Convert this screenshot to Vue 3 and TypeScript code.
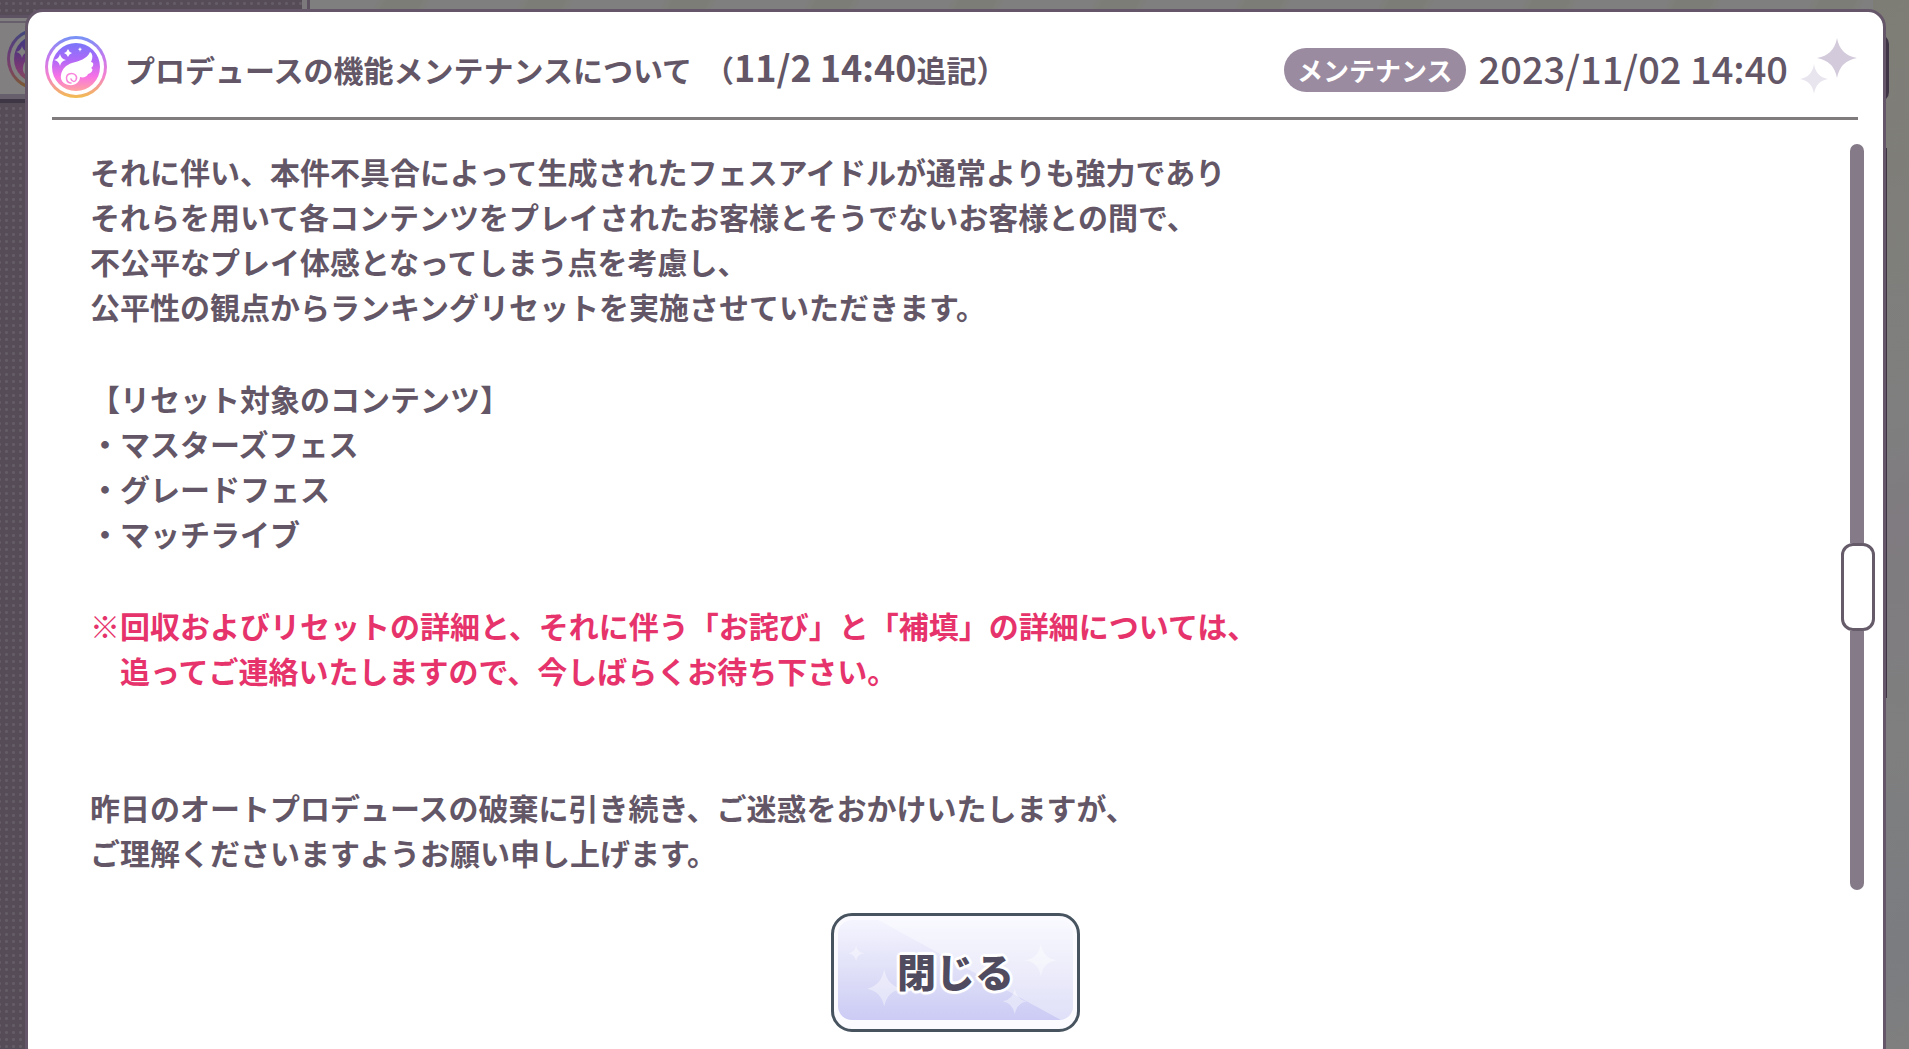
<script setup lang="ts">
interface Block {
  lines: string[]
  notice?: boolean
  spaced?: boolean
}

const blocks: Block[] = [
  {
    lines: [
      'それに伴い、本件不具合によって生成されたフェスアイドルが通常よりも強力であり',
      'それらを用いて各コンテンツをプレイされたお客様とそうでないお客様との間で、',
      '不公平なプレイ体感となってしまう点を考慮し、',
      '公平性の観点からランキングリセットを実施させていただきます。',
    ],
  },
  {
    lines: [
      '【リセット対象のコンテンツ】',
      '・マスターズフェス',
      '・グレードフェス',
      '・マッチライブ',
    ],
  },
  {
    notice: true,
    lines: [
      '※回収およびリセットの詳細と、それに伴う「お詫び」と「補填」の詳細については、',
      '　追ってご連絡いたしますので、今しばらくお待ち下さい。',
    ],
  },
  {
    spaced: true,
    lines: [
      '昨日のオートプロデュースの破棄に引き続き、ご迷惑をおかけいたしますが、',
      'ご理解くださいますようお願い申し上げます。',
    ],
  },
]
</script>

<template>
  <div class="page">
    <!-- Dimmed screen behind the dialog -->
    <div class="backdrop" aria-hidden="true">
      <div class="side">
        <div class="side-item">
          <svg class="side-icon" viewBox="0 0 62 62">
            <use href="#wing" />
          </svg>
        </div>
      </div>
      <div class="stage"></div>
      <div class="tabs">
        <div class="tab"></div>
        <div class="tab tab-long"></div>
      </div>
    </div>

    <main class="dialog" role="dialog" aria-labelledby="dialog-title">
      <header class="head">
        <svg class="emblem" viewBox="0 0 62 68" aria-hidden="true">
          <defs>
            <linearGradient id="ring" x1="0" y1="0" x2="0" y2="1">
              <stop offset="0" stop-color="#7593f6" />
              <stop offset="0.35" stop-color="#c678ee" />
              <stop offset="0.65" stop-color="#f583d0" />
              <stop offset="1" stop-color="#f2bd4c" />
            </linearGradient>
            <linearGradient id="disc" x1="0" y1="0" x2="0" y2="1">
              <stop offset="0" stop-color="#7a76fa" />
              <stop offset="0.35" stop-color="#ae68f8" />
              <stop offset="0.7" stop-color="#f872e6" />
              <stop offset="1" stop-color="#ffa3a0" />
            </linearGradient>
            <g id="wing">
              <circle cx="31" cy="31" r="31" fill="url(#ring)" />
              <circle cx="31" cy="31" r="28" fill="#fff" />
              <circle cx="31" cy="31" r="24" fill="url(#disc)" />
              <path
                fill="#fff"
                d="M45 16C48 18 48 22 46 26C49 26 49 30 46 32C49 33 47 37 43 38C42 41 38 42 35 41C35 46 30 50 24 49C18 48 15 44 16 39C17 33 21 29 27 27C34 25 42 23 45 16Z"
              />
              <path
                fill="none"
                stroke="#f985dc"
                stroke-width="1.5"
                stroke-linecap="round"
                d="M26 47C21 47 20 40 24 38C29 36 33 40 31 44C30 46 27 46 26 43"
              />
              <path fill="#fff" d="M15 18Q16 23 21 24Q16 25 15 30Q14 25 9 24Q14 23 15 18Z" />
              <path fill="#fff" d="M23 13Q24 16 27 17Q24 18 23 21Q22 18 19 17Q22 16 23 13Z" />
              <path fill="#fff" d="M35 11Q35 13 37 13Q35 14 35 16Q35 14 33 13Q35 13 35 11Z" />
            </g>
          </defs>
          <use href="#wing" />
        </svg>
        <h1 id="dialog-title" class="title">
          プロデュースの機能メンテナンスについて<span class="open">（</span><span class="num">11/2 14:40</span>追記）
        </h1>
        <span class="badge">メンテナンス</span>
        <time class="date" datetime="2023-11-02T14:40">2023/11/02 14:40</time>
        <svg class="sparkles" viewBox="0 0 58 64" aria-hidden="true">
          <path fill="#d3cadb" d="M37 0Q40 17 57 20Q40 23 37 40Q34 23 17 20Q34 17 37 0Z" />
          <path fill="#e9e5ef" d="M14 26Q16 39 28 41Q16 43 14 56Q12 43 0 41Q12 39 14 26Z" />
        </svg>
      </header>

      <div class="body">
        <article id="dialog-text" class="text">
          <p
            v-for="(block, i) in blocks"
            :key="i"
            class="block"
            :class="{ notice: block.notice, spaced: block.spaced }"
          >
            <span v-for="(line, j) in block.lines" :key="j" class="line">{{ line }}</span>
          </p>
        </article>
        <div class="scroll" role="scrollbar" aria-valuenow="60" aria-controls="dialog-text">
          <div class="track"></div>
          <div class="thumb"></div>
          <div class="track track-rest"></div>
        </div>
      </div>

      <footer class="foot">
        <button class="close-button" type="button">
          <svg class="facets" viewBox="0 0 234 102" preserveAspectRatio="none" aria-hidden="true">
            <defs>
              <linearGradient id="face" x1="0" y1="0" x2="0" y2="1">
                <stop offset="0" stop-color="#f5f5ff" />
                <stop offset="0.5" stop-color="#e0e0f8" />
                <stop offset="1" stop-color="#cbcbf5" />
              </linearGradient>
            </defs>
            <rect width="234" height="102" fill="url(#face)" />
            <path fill="#fff" fill-opacity="0.4" d="M40 0H234V102H222Z" />
            <g fill="#fff" fill-opacity="0.4">
              <path d="M46 50Q49 67 63 70Q49 73 46 88Q43 73 29 70Q43 67 46 50Z" />
              <path d="M176 70Q178 81 188 83Q178 85 176 96Q174 85 164 83Q174 81 176 70Z" />
              <path d="M18 26Q19 33 26 34Q19 35 18 42Q17 35 10 34Q17 33 18 26Z" />
              <path d="M202 24Q204 39 218 41Q204 43 202 58Q200 43 186 41Q200 39 202 24Z" />
            </g>
          </svg>
          <span class="label">閉じる</span>
        </button>
      </footer>
    </main>
  </div>
</template>

<style>
body {
  margin: 0;
  overflow: hidden;
}
</style>

<style scoped>
* {
  box-sizing: border-box;
}

.page {
  position: relative;
  height: 100vh;
  overflow: hidden;
  padding: 9px 23px 0 25px;
  background: #7f7f7e;
  color: #635666;
  font-family: 'Noto Sans CJK JP', 'Noto Sans', sans-serif;
}

.backdrop {
  position: absolute;
  inset: 0;
  display: flex;
}

.side {
  width: 310px;
  padding-top: 15px;
  border-right: 3px solid #5d5360;
  background:
    linear-gradient(#7c797d, #7c797d) right / 5px 100% no-repeat,
    radial-gradient(circle, #655d65 1px, transparent 2px) 3px 0 / 7px 7px,
    #554c58;
}

.side-item {
  height: 88px;
  padding: 10px 0 0 7px;
  border-top: 3px solid #5c5261;
  border-bottom: 4px solid #3e3644;
  background: #817f80;
  box-shadow: inset 0 3px #817f80, inset 0 5px #67606c, inset 0 -5px #67606c;
}

.side-icon {
  width: 62px;
  height: 62px;
  filter: brightness(0.5);
}

.stage {
  flex: 1;
  background: repeating-linear-gradient(115deg, #7f7f7f 0 60px, #7d7d77 70px 100px, #7f7f7f 110px 130px);
}

.tabs {
  display: flex;
  flex-direction: column;
  gap: 46px;
  width: 36px;
  padding-top: 34px;
  background: linear-gradient(160deg, #7e7d75, #7f7f7f 40%, #7f7b80 50%, #7f7f7f 70%, #7a7c80 90%, #7f7f7f);
}

.tab {
  width: 16px;
  height: 68px;
  border-radius: 0 10px 10px 0;
  background: #3f3545;
}

.tab-long {
  width: 14px;
  height: 550px;
  border-radius: 0;
}

.dialog {
  position: relative;
  border: 3px solid #655769;
  border-radius: 18px;
  background: #fff;
}

.head {
  display: flex;
  align-items: center;
  height: 108px;
  margin: 0 25px 0 24px;
  padding-top: 11px;
  border-bottom: 3px solid #807b7d;
}

.emblem {
  flex: none;
  width: 62px;
  height: 68px;
  margin: 0 18px 0 -7px;
}

.title {
  flex: 1;
  margin: 0;
  padding-bottom: 6px;
  font-size: 30px;
  font-weight: 700;
  line-height: 44px;
  white-space: nowrap;
}

.num {
  font-size: 36px;
}

.open {
  margin-left: 12px;
}

.badge {
  flex: none;
  height: 44px;
  padding: 0 13px;
  border-radius: 22px;
  background: #9b8ba0;
  color: #fff;
  font-size: 26px;
  font-weight: 700;
  line-height: 44px;
}

.date {
  margin: 0 12px 0 13px;
  padding-bottom: 4px;
  font-size: 38px;
  font-weight: 500;
  line-height: 44px;
  white-space: nowrap;
}

.sparkles {
  flex: none;
  width: 58px;
  height: 64px;
}

.body {
  display: flex;
  justify-content: space-between;
  padding: 24px 8px 0 62px;
}

.text {
  padding-top: 5px;
  font-size: 30px;
  font-weight: 700;
  line-height: 45px;
}

.block {
  margin: 0 0 47px;
}

.block.notice {
  color: #e6336b;
}

.block.spaced {
  margin-top: 92px;
  margin-bottom: 15px;
}

.line {
  display: block;
}

.scroll {
  display: flex;
  flex-direction: column;
  align-items: center;
  width: 34px;
}

.track {
  flex: 398;
  width: 14px;
  margin-right: 2px;
  border-radius: 7px 7px 0 0;
  background: #857a88;
}

.track-rest {
  flex: 259;
  border-radius: 0 0 7px 7px;
}

.thumb {
  width: 34px;
  height: 88px;
  border: 3px solid #655b69;
  border-radius: 12px;
  background: #fff;
}

.foot {
  display: flex;
  justify-content: center;
  padding: 23px 0 30px;
}

.close-button {
  display: grid;
  width: 249px;
  height: 119px;
  padding: 4px 4px 9px;
  border: 3px solid #47535f;
  border-radius: 21px;
  background: #fafaff;
  color: #504b5e;
  font-family: inherit;
  font-size: 39px;
  font-weight: 900;
  line-height: 56px;
}

.facets,
.label {
  grid-area: 1 / 1;
}

.facets {
  width: 100%;
  height: 100%;
  border-radius: 14px;
}

.label {
  place-self: center;
  text-shadow:
    3px 0 1px #fff,
    -3px 0 1px #fff,
    0 3px 1px #fff,
    0 -3px 1px #fff,
    2px 2px 1px #fff,
    -2px 2px 1px #fff,
    2px -2px 1px #fff,
    -2px -2px 1px #fff;
}
</style>
